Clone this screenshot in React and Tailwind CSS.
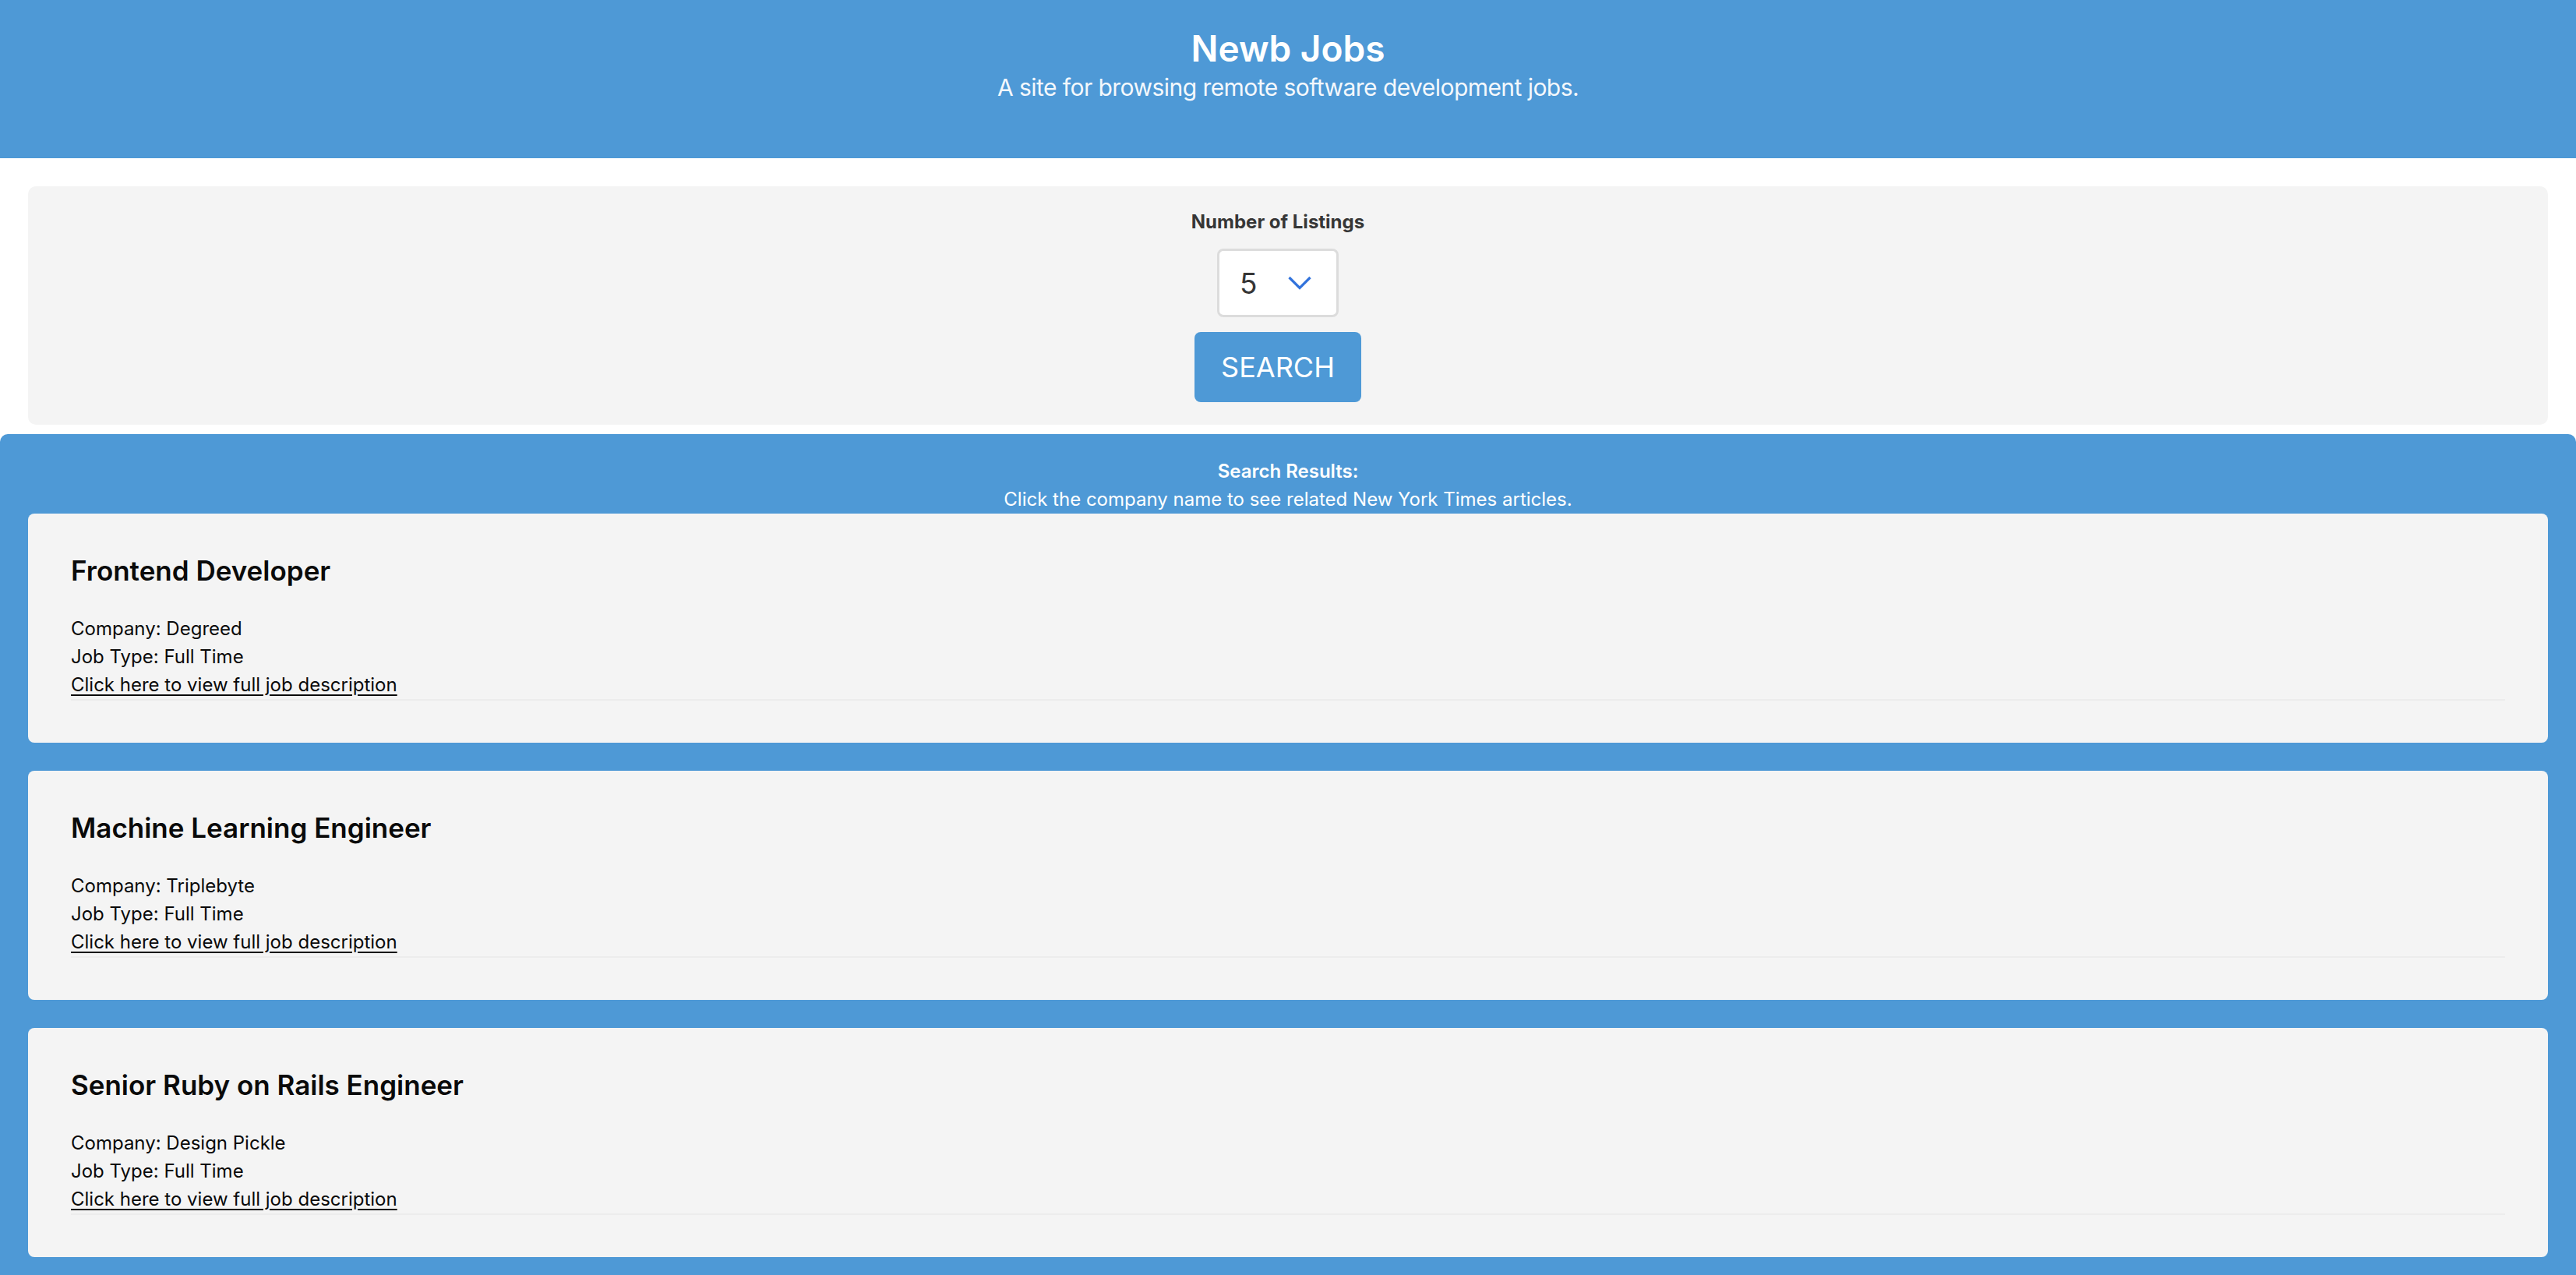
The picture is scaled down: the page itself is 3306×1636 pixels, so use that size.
import React from "react";

const jobs = [
  { title: "Frontend Developer", company: "Degreed", type: "Full Time" },
  { title: "Machine Learning Engineer", company: "Triplebyte", type: "Full Time" },
  { title: "Senior Ruby on Rails Engineer", company: "Design Pickle", type: "Full Time" },
];

const JobCard = ({ job }) => (
  <div className="rounded-[8px] bg-[#f4f4f4] px-[55px] pt-[52px] pb-[54px] text-[#0a0a0a]">
    <h2 className="text-[35px] font-semibold leading-[42px]">{job.title}</h2>
    <div className="mt-[36px] text-[24px] leading-[36px]">
      <p>Company: {job.company}</p>
      <p>Job Type: {job.type}</p>
      <a href="#" className="underline underline-offset-[4px]">
        Click here to view full job description
      </a>
    </div>
    <div className="h-[2px] bg-[#ececec]" />
  </div>
);

export default function App() {
  return (
    <div className="min-h-screen bg-white font-['Inter','Liberation_Sans',sans-serif]">
      <header className="h-[203px] bg-[#4e99d6] pt-[34px] text-center text-white">
        <h1 className="text-[46px] font-semibold leading-[56px]">Newb Jobs</h1>
        <p className="text-[30px] leading-[45px] tracking-[-0.55px] text-[#f4f8fc]">
          A site for browsing remote software development jobs.
        </p>
      </header>

      <div className="px-[36px] pt-[36px]">
        <div className="flex flex-col items-center rounded-[10px] bg-[#f4f4f4] pt-[28px] pb-[29px] pr-[26px]">
          <label className="text-[24px] font-bold leading-[36px] text-[#363636]">
            Number of Listings
          </label>
          <div className="mt-[16px] flex h-[88px] w-[156px] items-center rounded-[8px] border-[3px] border-[#dcdcdc] bg-white pl-[26px]">
            <span className="text-[37px] leading-none text-[#363636]">5</span>
            <svg className="ml-[39px]" width="30" height="18" viewBox="0 0 30 18" fill="none">
              <polyline points="1.5,2 15,15.5 28.5,2" stroke="#3273dc" strokeWidth="3.2" />
            </svg>
          </div>
          <button className="mt-[19px] h-[90px] w-[214px] rounded-[8px] bg-[#4e99d6] text-[36px] text-white">
            SEARCH
          </button>
        </div>
      </div>

      <section className="mt-[12px] rounded-t-[10px] bg-[#4e99d6] px-[36px] pt-[30px] pb-[36px]">
        <div className="text-center text-[24px] leading-[36px] text-white">
          <p className="font-semibold">Search Results:</p>
          <p>Click the company name to see related New York Times articles.</p>
        </div>
        <div className="flex flex-col gap-[36px]">
          {jobs.map((job) => (
            <JobCard key={job.title} job={job} />
          ))}
        </div>
      </section>
    </div>
  );
}
